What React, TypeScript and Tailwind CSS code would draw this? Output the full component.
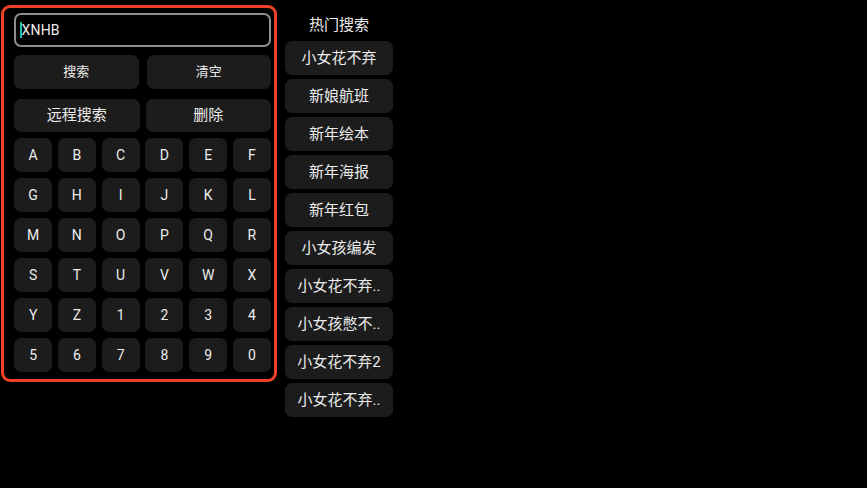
import React from "react";

const keys = "ABCDEFGHIJKLMNOPQRSTUVWXYZ1234567890".split("");
const hot = [
  "小女花不弃",
  "新娘航班",
  "新年绘本",
  "新年海报",
  "新年红包",
  "小女孩编发",
  "小女花不弃..",
  "小女孩憋不..",
  "小女花不弃2",
  "小女花不弃..",
];

export default function App() {
  return (
    <div
      className="w-[867px] h-[488px] bg-black text-[#ececec] flex items-start overflow-hidden"
      style={{ fontFamily: "Roboto, 'Noto Sans CJK SC', sans-serif" }}
    >
      {/* 键盘面板 */}
      <div className="ml-[1px] mt-[5px] w-[276px] border-[3px] border-[#ee4127] rounded-[9px] pl-[10px] pr-[3px] pt-[5px] pb-[7px] flex flex-col">
        <div className="h-[34px] border-2 border-[#8f8f8f] rounded-[7px] flex items-center pl-[4px]">
          <span className="w-[1.5px] h-[16px] bg-[#1fc2a8]" />
          <span className="text-[14px] leading-none tracking-[0.2px]">XNHB</span>
        </div>
        <div className="mt-[8px] flex gap-[8px]">
          <button className="flex-1 h-[34px] rounded-[7px] bg-[#1c1c1c] text-[13px]">搜索</button>
          <button className="flex-1 h-[34px] rounded-[7px] bg-[#1c1c1c] text-[13px]">清空</button>
        </div>
        <div className="mt-[10px] flex gap-[6px]">
          <button className="flex-1 h-[33px] rounded-[7px] bg-[#1c1c1c] text-[15px]">远程搜索</button>
          <button className="flex-1 h-[33px] rounded-[7px] bg-[#1c1c1c] text-[15px]">删除</button>
        </div>
        <div className="mt-[6px] grid grid-cols-6 gap-x-[5.6px] gap-y-[6px]">
          {keys.map((k) => (
            <button key={k} className="h-[34px] rounded-[7px] bg-[#1c1c1c] text-[14px]">
              {k}
            </button>
          ))}
        </div>
      </div>

      {/* 热门搜索 */}
      <div className="ml-[8px] w-[108px] pt-[13px] flex flex-col gap-[4px]">
        <div className="h-[24px] leading-[24px] text-center text-[15px]">热门搜索</div>
        {hot.map((h, i) => (
          <div
            key={i}
            className="h-[34px] rounded-[7px] bg-[#1c1c1c] flex items-center justify-center text-[15px] whitespace-nowrap"
          >
            {h}
          </div>
        ))}
      </div>
    </div>
  );
}
